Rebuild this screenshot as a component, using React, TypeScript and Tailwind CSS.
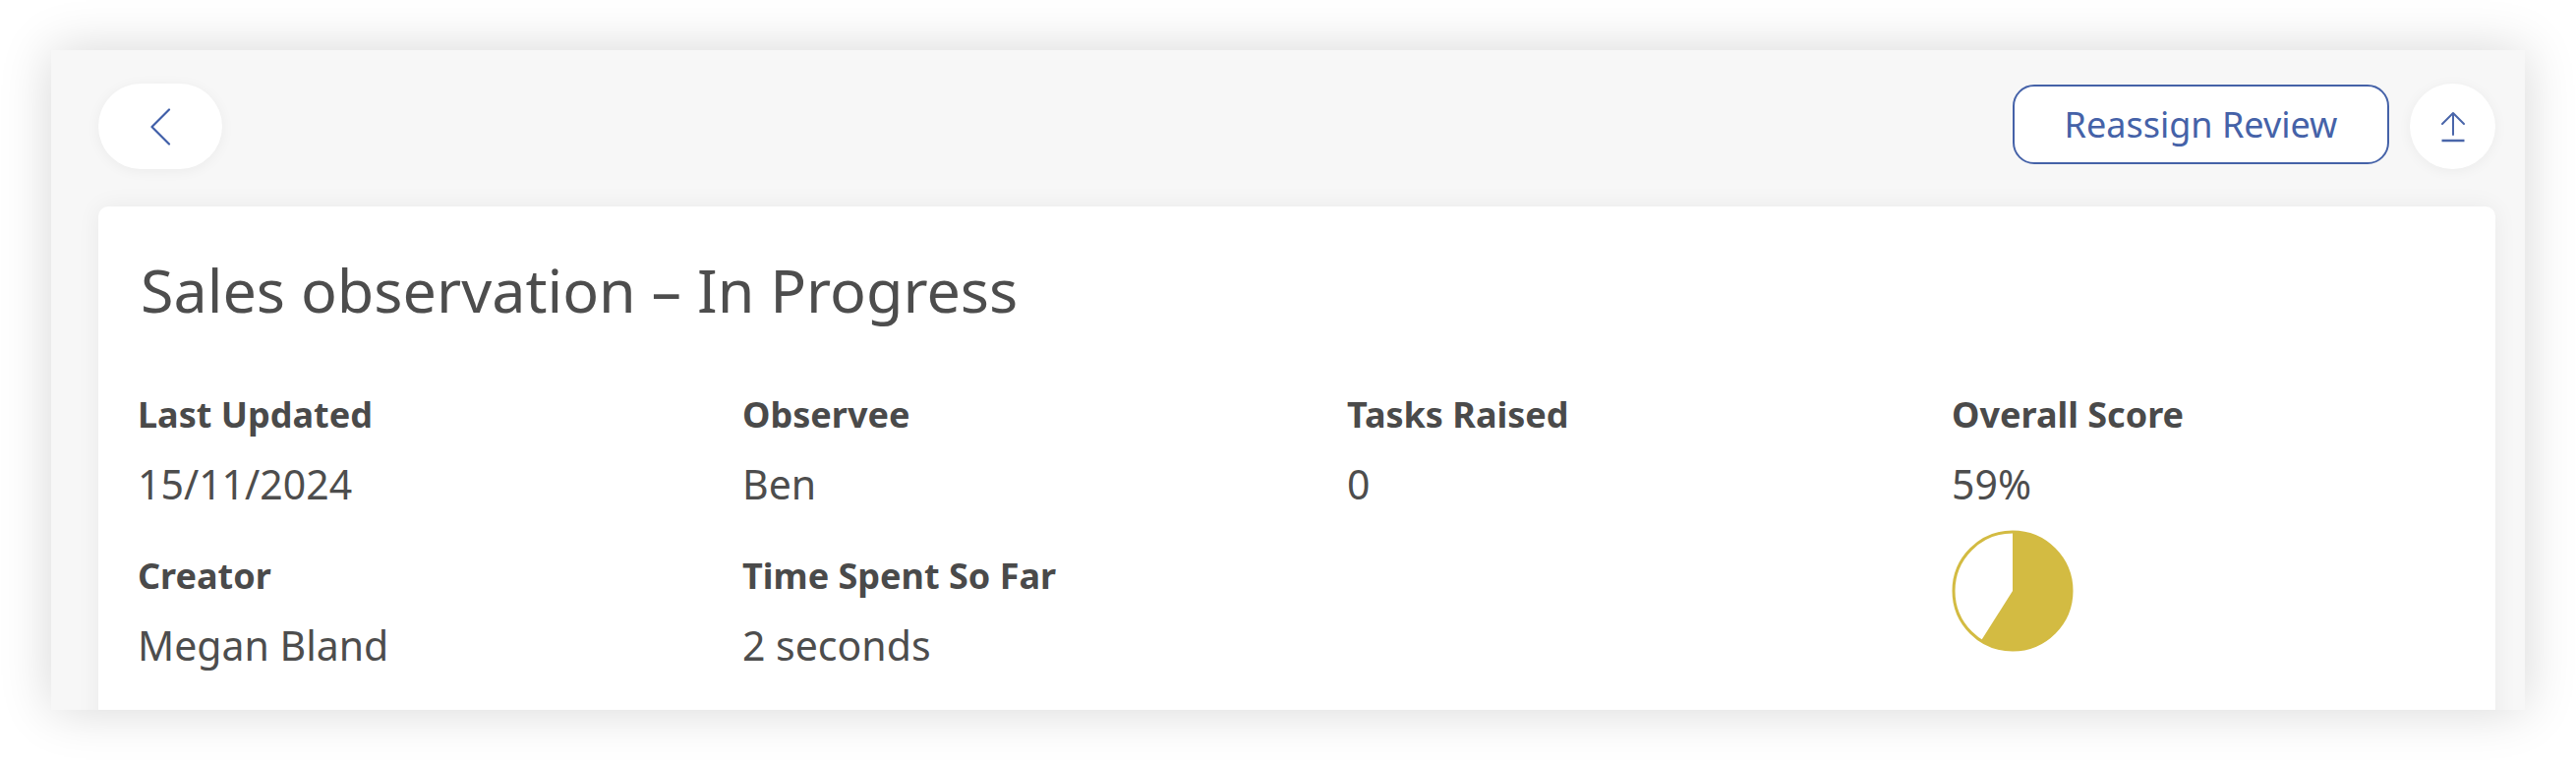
import React from "react";

const font = { fontFamily: '"Noto Sans", "Open Sans", sans-serif' };

function Field({ label, value }: { label: string; value: string }) {
  return (
    <div className="flex flex-col">
      <div className="text-[36px] leading-[32px] font-bold text-[#4a4a4a] whitespace-nowrap">{label}</div>
      <div className="mt-[34px] text-[41px] leading-[40px] text-[#4d4d4d] whitespace-nowrap">{value}</div>
    </div>
  );
}

function Pie({ pct }: { pct: number }) {
  const a = (pct / 100) * Math.PI * 2;
  const r = 60;
  const cx = 62;
  const cy = 62;
  const x = cx + r * Math.sin(a);
  const y = cy - r * Math.cos(a);
  const large = pct > 50 ? 1 : 0;
  return (
    <svg width="124" height="124" viewBox="0 0 124 124">
      <circle cx={cx} cy={cy} r={r} fill="#ffffff" stroke="#d3bb42" strokeWidth="3" />
      <path d={`M${cx} ${cy} L${cx} ${cy - r} A${r} ${r} 0 ${large} 1 ${x} ${y} Z`} fill="#d3bb42" />
    </svg>
  );
}

export default function App() {
  return (
    <div className="w-[2620px] h-[774px] bg-white pt-[51px] pl-[52px] overflow-hidden" style={font}>
      <div className="w-[2516px] h-[671px] bg-[#f7f7f7] overflow-hidden pt-[34px] pl-[48px] pr-[30px] shadow-[0_0_50px_rgba(0,0,0,0.16)]">
        <div className="flex items-start justify-between h-[87px]">
          <button className="w-[126px] h-[87px] rounded-full bg-white flex items-center justify-center shadow-[0_2px_14px_rgba(0,0,0,0.05)]">
            <svg width="22" height="38" viewBox="0 0 22 38" fill="none">
              <polyline points="20,1.5 2.5,19 20,36.5" stroke="#3f5ea8" strokeWidth="2.2" strokeLinecap="round" strokeLinejoin="round" />
            </svg>
          </button>
          <div className="flex items-start gap-[21px]">
            <button className="w-[383px] h-[81px] mt-[1px] rounded-[22px] border-[2.5px] border-[#4562a8] bg-white text-[36px] text-[#4562a8] flex items-center justify-center">
              Reassign Review
            </button>
            <button className="w-[87px] h-[87px] rounded-full bg-white flex items-center justify-center shadow-[0_2px_14px_rgba(0,0,0,0.05)]">
              <svg width="26" height="32" viewBox="0 0 26 32" fill="none">
                <path d="M13 2 V24 M2 13 L13 2 L24 13" stroke="#4a66aa" strokeWidth="2" strokeLinecap="round" strokeLinejoin="round" />
                <path d="M1.5 30 H24.5" stroke="#4a66aa" strokeWidth="2.5" />
              </svg>
            </button>
          </div>
        </div>
        <div className="mt-[38px] h-[600px] bg-white rounded-t-[10px] shadow-[0_0_24px_rgba(0,0,0,0.06)] pt-[53px] pl-[40px]">
          <h1 className="text-[61px] leading-[64px] font-normal text-[#4d4d4d] pl-[3px] whitespace-nowrap">Sales observation – In Progress</h1>
          <div className="mt-[79px] grid grid-cols-[repeat(4,615px)]">
            <div className="flex flex-col gap-[58px]">
              <Field label="Last Updated" value="15/11/2024" />
              <Field label="Creator" value="Megan Bland" />
            </div>
            <div className="flex flex-col gap-[58px]">
              <Field label="Observee" value="Ben" />
              <Field label="Time Spent So Far" value="2 seconds" />
            </div>
            <div className="flex flex-col">
              <Field label="Tasks Raised" value="0" />
            </div>
            <div className="flex flex-col">
              <Field label="Overall Score" value="59%" />
              <div className="mt-[27px]">
                <Pie pct={59} />
              </div>
            </div>
          </div>
        </div>
      </div>
    </div>
  );
}
